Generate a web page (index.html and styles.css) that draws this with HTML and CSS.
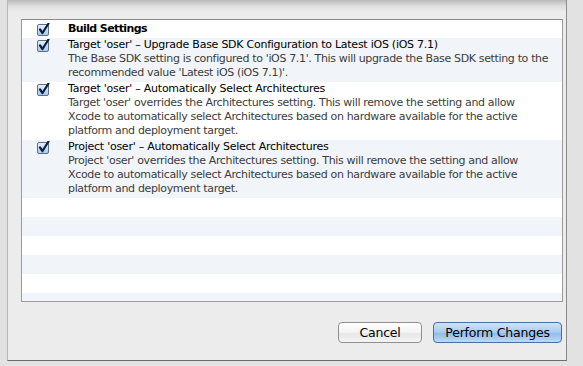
FILE: index.html
```html
<!DOCTYPE html>
<html lang="en">

<head>
  <meta charset="UTF-8">
  <title>Perform Changes</title>
  <link rel="stylesheet" href="styles.css">
</head>

<body>
  <div class="backdrop">
    <div class="sheet">
      <div class="change-list">
        <div class="row header">
          <span class="check"><svg viewBox="0 0 13 13" width="13" height="13"><rect x="0.5" y="1.5" width="11" height="11" rx="1.5" fill="url(#box)" stroke="#5d6f8a"/><path d="M3 6.5 L5.5 10 L11.5 0.5" fill="none" stroke="#0d1f44" stroke-width="2.2" stroke-linecap="round" stroke-linejoin="round"/></svg></span>
          <div class="text"><b>Build Settings</b></div>
        </div>
        <div class="row alt">
          <span class="check"><svg viewBox="0 0 13 13" width="13" height="13"><rect x="0.5" y="1.5" width="11" height="11" rx="1.5" fill="url(#box)" stroke="#5d6f8a"/><path d="M3 6.5 L5.5 10 L11.5 0.5" fill="none" stroke="#0d1f44" stroke-width="2.2" stroke-linecap="round" stroke-linejoin="round"/></svg></span>
          <div class="text">
            <div class="title">Target 'oser' – Upgrade Base SDK Configuration to Latest iOS (iOS 7.1)</div>
            <div class="desc">The Base SDK setting is configured to 'iOS 7.1'. This will upgrade the Base SDK setting to the<br>recommended value 'Latest iOS (iOS 7.1)'.</div>
          </div>
        </div>
        <div class="row">
          <span class="check"><svg viewBox="0 0 13 13" width="13" height="13"><rect x="0.5" y="1.5" width="11" height="11" rx="1.5" fill="url(#box)" stroke="#5d6f8a"/><path d="M3 6.5 L5.5 10 L11.5 0.5" fill="none" stroke="#0d1f44" stroke-width="2.2" stroke-linecap="round" stroke-linejoin="round"/></svg></span>
          <div class="text">
            <div class="title">Target 'oser' – Automatically Select Architectures</div>
            <div class="desc">Target 'oser' overrides the Architectures setting. This will remove the setting and allow<br>Xcode to automatically select Architectures based on hardware available for the active<br>platform and deployment target.</div>
          </div>
        </div>
        <div class="row alt">
          <span class="check"><svg viewBox="0 0 13 13" width="13" height="13"><rect x="0.5" y="1.5" width="11" height="11" rx="1.5" fill="url(#box)" stroke="#5d6f8a"/><path d="M3 6.5 L5.5 10 L11.5 0.5" fill="none" stroke="#0d1f44" stroke-width="2.2" stroke-linecap="round" stroke-linejoin="round"/></svg></span>
          <div class="text">
            <div class="title">Project 'oser' – Automatically Select Architectures</div>
            <div class="desc">Project 'oser' overrides the Architectures setting. This will remove the setting and allow<br>Xcode to automatically select Architectures based on hardware available for the active<br>platform and deployment target.</div>
          </div>
        </div>
        <div class="empty"></div>
        <div class="empty alt"></div>
        <div class="empty"></div>
        <div class="empty alt"></div>
        <div class="empty"></div>
        <div class="empty alt"></div>
      </div>
      <div class="buttons">
        <button class="btn">Cancel</button>
        <button class="btn primary">Perform Changes</button>
      </div>
    </div>
  </div>

  <svg width="0" height="0" class="defs">
    <defs>
      <linearGradient id="box" x1="0" y1="0" x2="0" y2="1">
        <stop offset="0" stop-color="#e9f2fc"/>
        <stop offset="1" stop-color="#a9c6ea"/>
      </linearGradient>
    </defs>
  </svg>
</body>

</html>
```

FILE: styles.css
```css
body {
  margin: 0;
  padding: 0;
  background-color: #e4e4e4;
  font-family: "DejaVu Sans", sans-serif;
  font-size: 11px;
  color: #000;
}

.defs {
  position: absolute;
}

.backdrop {
  width: 583px;
  height: 366px;
  overflow: hidden;
  padding-left: 7px;
  box-sizing: border-box;
  background-color: #e2e2e2;
}

.sheet {
  width: 560px;
  height: 361px;
  box-sizing: border-box;
  border-right: 1px solid #8c8c8c;
  border-bottom: 1px solid #6c6c6c;
  border-left: 1px solid #b8b8b8;
  background: linear-gradient(#b9b9b9, #dedede 6px, #ececec 12px, #ececec);
  padding: 19px 3px 0 13px;
}

.change-list {
  height: 283px;
  box-sizing: border-box;
  border: 1px solid #9b9b9b;
  border-top-color: #8a8a8a;
  background-color: #fff;
  overflow: hidden;
}

.row {
  display: flex;
  padding: 0 0 2px 0;
}

.header {
  height: 18px;
  padding: 0;
  align-items: center;
}

.header b {
  letter-spacing: -0.6px;
}

.alt {
  background-color: #f1f5fa;
}

.check {
  width: 46px;
  padding-left: 15px;
  box-sizing: border-box;
  flex-shrink: 0;
}

.check svg {
  display: block;
  margin-top: 1px;
}

.text {
  line-height: 14px;
  white-space: nowrap;
  letter-spacing: -0.25px;
}

.desc {
  color: #3c3c3c;
  letter-spacing: -0.35px;
}

.empty {
  height: 19px;
}

.buttons {
  display: flex;
  justify-content: flex-end;
  gap: 11px;
  margin-top: 20px;
  padding-right: 1px;
}

.btn {
  height: 21px;
  width: 84px;
  border: 1px solid #8f8f8f;
  border-radius: 4px;
  background: linear-gradient(#ffffff, #f3f3f3 50%, #e6e6e6 51%, #f4f4f4);
  font-family: "DejaVu Sans", sans-serif;
  font-size: 12.5px;
  letter-spacing: -0.2px;
  color: #000;
  padding: 0;
}

.primary {
  width: 129px;
  border-color: #4a6fa0;
  background: linear-gradient(#cfe3f8, #a7cbef 50%, #8dbaea 51%, #b9dbf8);
}
```
